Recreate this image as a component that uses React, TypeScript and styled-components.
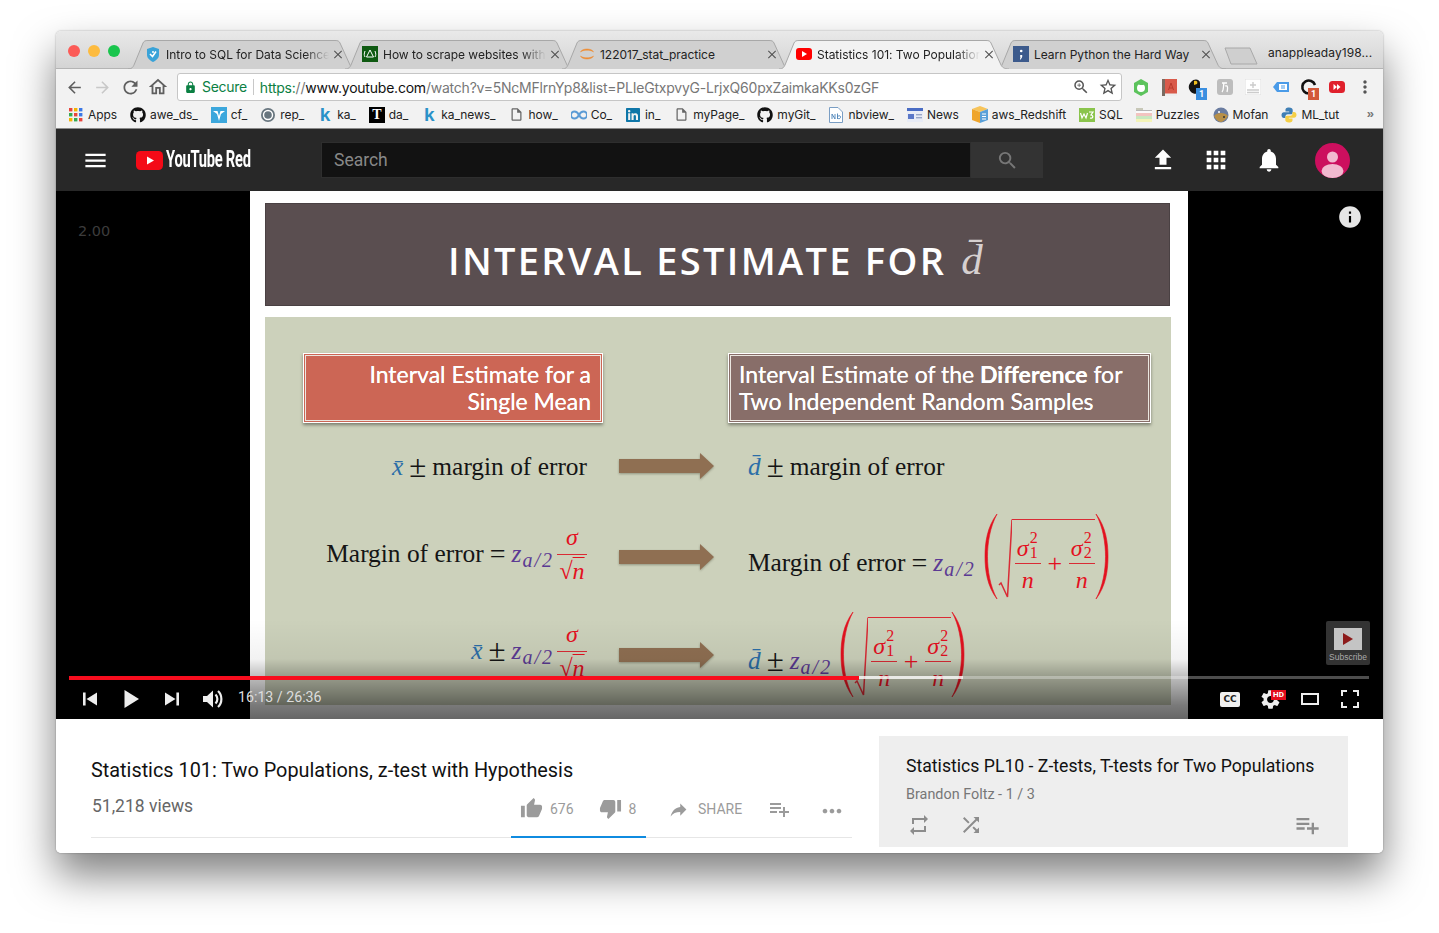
import React from 'react';
import styled, { createGlobalStyle } from 'styled-components';
import { FaGithub, FaLinkedin } from 'react-icons/fa';
import {
  MdArrowBack, MdArrowForward, MdRefresh, MdOutlineHome, MdLock, MdZoomIn, MdStarBorder, MdMoreVert,
  MdMenu, MdSearch, MdFileUpload, MdApps, MdNotifications, MdInfo, MdThumbUp, MdThumbDown, MdReply,
  MdPlaylistAdd, MdMoreHoriz, MdRepeat, MdShuffle, MdSettings, MdClose, MdOutlineInsertDriveFile,
} from 'react-icons/md';

const Global = createGlobalStyle`
  html, body { margin: 0; padding: 0; background: #fff; }
  body { font-family: Roboto, "Liberation Sans", sans-serif; overflow: hidden; }
  * { box-sizing: border-box; }
`;

const Page = styled.div`
  width: 1439px; height: 933px; padding: 31px 0 0 56px; background: #fff;
`;
const Win = styled.div`
  width: 1327px; height: 822px; border-radius: 5px; overflow: hidden; background: #fff;
  box-shadow: 0 22px 42px rgba(0,0,0,.5), 0 0 2px rgba(0,0,0,.35);
  display: flex; flex-direction: column;
`;
const TabStrip = styled.div`
  height: 38px; flex: none; display: flex; align-items: flex-end; padding-left: 12px;
  background: linear-gradient(#e9e9e9, #d4d4d4); border-bottom: 1px solid #b4b4b4;
`;
const Lights = styled.div`
  display: flex; gap: 8px; align-self: flex-start; margin: 14px 8px 0 0;
`;
const Light = styled.span<{ $c: string }>`
  width: 12px; height: 12px; border-radius: 50%; background: ${p => p.$c};
`;
const Tab = styled.div<{ $active?: boolean; $first?: boolean }>`
  position: relative; width: 230px; height: 29px; margin-left: ${p => p.$first ? 0 : -13}px; margin-bottom: -1px;
  display: flex; align-items: center; padding: 0 13px 1px 17px; flex: none;
  z-index: ${p => p.$active ? 2 : 1};
  font: 12px Inter, "Liberation Sans", sans-serif; color: #222;
  letter-spacing: -.02px;
`;
const TabShape = styled.svg`
  position: absolute; inset: 0; width: 100%; height: 100%;
`;
const Fav = styled.span`
  position: relative; width: 16px; height: 16px; flex: none; margin-right: 5px; display: flex; align-items: center; justify-content: center;
`;
const TabTitle = styled.span<{ $fade?: boolean }>`
  position: relative; flex: 1; white-space: nowrap; overflow: hidden;
  ${p => p.$fade ? 'mask-image: linear-gradient(90deg, #000 85%, transparent 100%);' : ''}
`;
const TabClose = styled.span`
  position: relative; width: 14px; display: flex; justify-content: center; color: #555; flex: none; margin-left: 2px;
`;
const NewTab = styled.svg`
  width: 34px; height: 18px; flex: none; margin: 0 0 3px -2px;
`;
const Account = styled.div`
  font: 12px Inter, "Liberation Sans", sans-serif; color: #222; align-self: flex-start; margin: 14px 0 0 10px; letter-spacing: .1px; white-space: nowrap;
`;
const Toolbar = styled.div`
  height: 33px; flex: none; background: #f2f2f2; display: flex; align-items: center; padding: 3px 0 0 4px;
`;
const Nav = styled.span<{ $off?: boolean }>`
  width: 28px; display: flex; justify-content: center; color: ${p => p.$off ? '#c8c8c8' : '#5f5f5f'}; flex: none;
`;
const Address = styled.div`
  width: 945px; height: 28px; margin: 0 5px; background: #fff; border: 1px solid #c6c6c6; border-radius: 3px; flex: none;
  display: flex; align-items: center; padding: 0 0 0 6px; font: 14px Inter, "Liberation Sans", sans-serif; white-space: nowrap;
`;
const Secure = styled.span`
  color: #0b8043; margin-left: 5px; padding-right: 6px; border-right: 1px solid #c8c8c8; line-height: 16px; letter-spacing: -.3px;
`;
const Url = styled.span`
  margin-left: 6px; color: #777; flex: 1; letter-spacing: -.22px;
  b { font-weight: 400; color: #0b8043; }
  i { font-style: normal; color: #111; }
`;
const AddrBtn = styled.span`
  width: 27px; display: flex; justify-content: center; color: #555; flex: none;
`;
const Ext = styled.span`
  position: relative; width: 28px; height: 20px; display: flex; justify-content: center; align-items: center; flex: none;
`;
const Badge = styled.span<{ $c: string }>`
  position: absolute; right: 4px; bottom: -3px; width: 11px; height: 12px; background: ${p => p.$c}; color: #fff;
  font: 700 9px/12px Roboto, sans-serif; text-align: center;
`;
const Marks = styled.div`
  height: 27px; flex: none; background: #f2f2f2; display: flex; align-items: center; gap: 13px; padding: 0 0 1px 12px;
  border-bottom: 1px solid #8a8a8a; position: relative;
`;
const Mark = styled.span`
  display: flex; align-items: center; gap: 4px; font: 12px Inter, "Liberation Sans", sans-serif; color: #222; white-space: nowrap; flex: none; letter-spacing: -.05px;
`;
const MarkIcon = styled.span`
  width: 16px; height: 16px; display: flex; align-items: center; justify-content: center; flex: none;
`;
const KGlyph = styled.span`
  font: 700 19px/16px "Liberation Sans", sans-serif; color: #2a91c8;
`;
const TGlyph = styled.span`
  width: 16px; height: 16px; background: #000; color: #fff; font: 700 14px/16px "Liberation Serif", serif; text-align: center;
`;
const More = styled.span`
  position: absolute; right: 9px; top: 3px; font: 700 13px/18px "Liberation Sans", sans-serif; color: #777;
`;
const YtBar = styled.header`
  height: 62px; flex: none; background: #282828; display: flex; align-items: center; padding-left: 26px; color: #fff;
`;
const LogoWrap = styled.div`
  display: flex; align-items: center; margin-left: 27px; width: 185px; flex: none;
`;
const LogoText = styled.span`
  display: block; width: 86px; margin-left: 3px; font: 700 23px/24px Roboto, sans-serif; white-space: nowrap; letter-spacing: -.4px;
  transform: scaleX(.64); transform-origin: left center;
`;
const SearchBox = styled.div`
  width: 650px; height: 36px; background: #121212; border: 1px solid #2e2e2e; font-size: 17.5px; color: #888; display: flex; align-items: center; padding-left: 12px; flex: none;
`;
const SearchBtn = styled.div`
  width: 72px; height: 36px; background: #333; color: #777; display: flex; align-items: center; justify-content: center; flex: none;
`;
const YtIcons = styled.div`
  display: flex; align-items: center; margin-left: 106px; gap: 25px;
`;
const Avatar = styled.svg`
  margin-left: 32px; flex: none;
`;
const Player = styled.section`
  position: relative; height: 528px; flex: none; background: #000; overflow: hidden; padding-left: 194px;
`;
const Slide = styled.div`
  width: 938px; height: 528px; background: #fff; padding: 12px 0 0 15px;
`;
const SlideHead = styled.div`
  width: 905px; height: 103px; background: #5a4e50; border: 1px solid #4a4143; color: #fff; display: flex; align-items: center; padding: 11px 0 0 182px;
  font: 600 38px "Open Sans", sans-serif; letter-spacing: 2.3px; white-space: nowrap;
`;
const HeadVar = styled.span`
  font: italic 400 43px "Liberation Serif", serif; color: #d6d0d0; margin-left: 15px; letter-spacing: 0; position: relative; top: -1px;
`;
const SlideBody = styled.div`
  width: 906px; height: 388px; margin-top: 11px; background: #ccd1bb; padding-top: 36px;
`;
const BoxRow = styled.div`
  display: flex; gap: 125px; padding-left: 38px; margin-bottom: 22px;
`;
const LabelBox = styled.div<{ $w: number; $bg: string; $right?: boolean }>`
  width: ${p => p.$w}px; height: 70px; flex: none; background: ${p => p.$bg}; border: 1px solid #fff;
  outline: 1px solid #eae6df; outline-offset: -3px;
  box-shadow: 0 2px 3px rgba(60,60,50,.55), inset 0 0 0 3px ${p => p.$bg};
  color: #fff; font: 400 23px/27px Lato, "Open Sans", sans-serif; padding: 7px 11px 0 10px;
  text-shadow: 0 0 .5px #fff;
  text-align: ${p => p.$right ? 'right' : 'left'}; white-space: nowrap;
  b { font-weight: 700; }
`;
const MathRow = styled.div<{ $h: number; $mb?: number }>`
  height: ${p => p.$h}px; margin-bottom: ${p => p.$mb ?? 0}px; display: grid; grid-template-columns: 322px 161px 1fr; align-items: center;
`;
const Formula = styled.div<{ $right?: boolean }>`
  display: flex; align-items: center; justify-content: ${p => p.$right ? 'flex-end' : 'flex-start'}; white-space: nowrap;
  font: 25.4px "Liberation Serif", serif; color: #151515;
`;
const Txt = styled.span<{ $shift?: number }>`
  position: relative; top: ${p => p.$shift ?? 0}px; display: inline-flex; align-items: center;
`;
const Bar = styled.span`
  font-style: italic; color: #2b6ea8; margin-right: 6px;
`;
const Pm = styled.span`
  margin-right: 6px; font-size: 31px; line-height: 25px;
`;
const Eq = styled.span`
  margin: 0 6px; font-size: 28px; line-height: 25px;
`;
const Zed = styled.span`
  font-style: italic; color: #5b3a93; margin-right: 3px;
  sub { font-size: 20px; vertical-align: -5px; line-height: 0; letter-spacing: 2px; margin-left: 1px; }
`;
const Frac = styled.span<{ $w?: number }>`
  display: inline-flex; flex-direction: column; align-items: center; color: #e3101f; width: ${p => p.$w ?? 30}px;
  font: italic 24px/22px "Liberation Serif", serif;
`;
const FracTop = styled.span<{ $pb?: number }>`
  display: block; width: 100%; text-align: center; border-bottom: 1.5px solid #d92b35; padding-bottom: ${p => p.$pb ?? 6}px; white-space: nowrap;
`;
const FracBot = styled.span`
  display: block; text-align: center; padding-top: 5px;
`;
const RootedN = styled.span`
  text-decoration: overline; text-decoration-thickness: 1px;
`;
const Sig = styled.span`
  position: relative; display: inline-block; padding-right: 10px; line-height: 22px;
  sup, sub { position: absolute; font: 16px/12px "Liberation Serif", serif; left: 13px; }
  sup { top: -5px; }
  sub { top: 10px; }
`;
const Root = styled.span`
  display: inline-flex; align-items: stretch; height: 87px; margin-left: 5px; color: #e3101f;
`;
const Under = styled.span`
  width: 83px; border-top: 1.5px solid #d92b35; margin: 6px 0 0 0; display: flex; align-items: flex-start; justify-content: space-between; padding: 17px 0 0 3px;
`;
const Plus = styled.span`
  font: 26px/25px "Liberation Serif", serif; margin-top: 14px;
`;
const Arrow = styled.svg`
  margin-left: 31px; filter: drop-shadow(0 1px 1px rgba(60,60,40,.4));
`;
const Overlay = styled.div`
  position: absolute; left: 0; right: 0; bottom: 0; height: 100px;
  background: linear-gradient(rgba(0,0,0,0) 0%, rgba(0,0,0,.05) 40%, rgba(0,0,0,.24) 56%, rgba(0,0,0,.52) 86%, rgba(0,0,0,.6) 100%);
`;
const Speed = styled.div`
  position: absolute; left: 22px; top: 32px; font: 14.5px "DejaVu Sans", sans-serif; color: #3c3c3c;
`;
const InfoBtn = styled.div`
  position: absolute; right: 20px; top: 13px; color: #e6e6e6; display: flex;
`;
const Sub = styled.div`
  position: absolute; left: 1270px; top: 430px; width: 44px; height: 44px; background: #333; border-radius: 2px;
  display: flex; flex-direction: column; align-items: center; padding-top: 7px;
  font: 8.5px/10px "Liberation Sans", sans-serif; color: #aaa;
`;
const SubIcon = styled.span`
  width: 28px; height: 22px; background: #c4c4c4; display: flex; align-items: center; justify-content: center; margin-bottom: 2px;
`;
const Track = styled.div`
  position: absolute; left: 13px; right: 14px; top: 485px; height: 3px; background: rgba(255,255,255,.3);
`;
const Buffered = styled.div`
  position: absolute; left: 0; top: 0; height: 100%; width: 894px; background: rgba(255,255,255,.7);
`;
const Played = styled.div`
  position: absolute; left: 0; top: -.5px; height: 4px; width: 790px; background: #f80d1e;
`;
const Controls = styled.div`
  position: absolute; left: 13px; right: 13px; top: 490px; height: 36px; display: flex; align-items: center; color: #eee;
`;
const Ctl = styled.span`
  width: 41px; height: 36px; display: flex; align-items: center; justify-content: center; flex: none; position: relative;
`;
const CtlR = styled(Ctl)`
  width: 40px;
`;
const Time = styled.span`
  margin-left: 5px; font-size: 14.2px; color: #ddd; flex: 1; position: relative; top: -2px;
`;
const CC = styled.span`
  width: 20px; height: 15px; background: #f0f0f0; color: #222; border-radius: 2px; font: 700 9px/15px "DejaVu Sans", sans-serif; text-align: center;
`;
const HD = styled.span`
  position: absolute; left: 21px; top: 9px; width: 15px; height: 10px; background: #e40c1c; color: #fff; font: 700 8px/10px Roboto, sans-serif; text-align: center;
`;
const Below = styled.section`
  flex: 1; display: flex; background: #fff; padding-left: 35px; align-items: flex-start;
`;
const Info = styled.div`
  width: 761px; flex: none; padding-top: 40px;
`;
const Title = styled.div`
  font-size: 19.85px; line-height: 24px; color: #111; white-space: nowrap;
`;
const Meta = styled.div`
  display: flex; height: 55px; margin-top: 0; border-bottom: 1px solid #e6e6e6; align-items: stretch;
`;
const Views = styled.div`
  font-size: 17.5px; line-height: 24px; color: #666; padding: 11px 0 0 1px; width: 420px; flex: none;
`;
const Ratings = styled.div`
  display: flex; align-items: center; width: 135px; padding: 0 0 2px 9px; margin-bottom: -1px; border-bottom: 2px solid #0f8be0; flex: none; color: #9b9b9b; font-size: 14px;
`;
const Act = styled.span<{ $ml?: number; $gap?: number; $top?: number }>`
  display: flex; align-items: center; gap: ${p => p.$gap ?? 7}px; margin-left: ${p => p.$ml ?? 0}px; color: #9b9b9b; font-size: 14px; flex: none;
  position: relative; top: ${p => p.$top ?? 0}px;
`;
const Actions = styled.div`
  display: flex; align-items: center; padding: 0 0 2px; flex: none;
`;
const Panel = styled.aside`
  margin: 17px 0 0 27px; width: 469px; height: 111px; background: #eee; padding: 18px 27px 0;
`;
const PanelTitle = styled.div`
  font-size: 17.65px; line-height: 24px; color: #111; white-space: nowrap;
`;
const PanelSub = styled.div`
  font-size: 14.4px; line-height: 20px; color: #777; margin-top: 7px;
`;
const PanelIcons = styled.div`
  display: flex; align-items: center; color: #8c8c8c; margin-top: 6px; margin-left: 1px;
`;
const Spacer = styled.span`
  flex: 1;
`;
const Gap = styled.span`
  width: 28px; flex: none;
`;
const Mirror = styled.span`
  display: flex; transform: scaleX(-1); margin-right: 2px;
`;

const TabBg = ({ active }: { active?: boolean }) => (
  <TabShape viewBox="0 0 230 29" preserveAspectRatio="none">
    <path d="M0 29 C4 29 5 27 6 25 L15 3 C16 1 17 .5 20 .5 H207 C210 .5 211 1 212 3 L222 25 C223 27 225 29 230 29"
      fill={active ? '#f2f2f2' : '#d0d0d0'} stroke="#a8a8a8" strokeWidth="1" />
  </TabShape>
);

const Close = () => <TabClose><MdClose size={15} /></TabClose>;

const BigArrow = () => (
  <Arrow width="97" height="28" viewBox="0 0 97 28">
    <polygon points="1,7 82,7 82,1 96,14 82,27 82,21 1,21" fill="#8f6f52" />
  </Arrow>
);

const Paren = ({ flip }: { flip?: boolean }) => (
  <svg width="14" height="87" viewBox="0 0 14 87" style={flip ? { transform: 'scaleX(-1)' } : undefined}>
    <path d="M13 1 C3 14 1 30 1 43.5 C1 57 3 73 13 86 C6 73 3.5 57 3.5 43.5 C3.5 30 6 14 13 1Z" fill="#e3101f" stroke="#e3101f" strokeWidth=".6" />
  </svg>
);
const Radical = () => (
  <svg width="14" height="87" viewBox="0 0 14 87">
    <path d="M1 72 L3 70 L9.5 84 L14 6.5" fill="none" stroke="#d92b35" strokeWidth="1.5" />
  </svg>
);
const RootSum = () => (
  <Root>
    <Paren />
    <Radical />
    <Under>
      <Frac $w={26}><FracTop $pb={4}><Sig>σ<sup>2</sup><sub>1</sub></Sig></FracTop><FracBot>n</FracBot></Frac>
      <Plus>+</Plus>
      <Frac $w={26}><FracTop $pb={4}><Sig>σ<sup>2</sup><sub>2</sub></Sig></FracTop><FracBot>n</FracBot></Frac>
    </Under>
    <Paren flip />
  </Root>
);
const SimpleFrac = () => <Frac><FracTop>σ</FracTop><FracBot>√<RootedN>n</RootedN></FracBot></Frac>;
const Za = () => <Zed>z<sub>a/2</sub></Zed>;

const Shield = () => (
  <svg width="14" height="15" viewBox="0 0 14 15"><path d="M1 2 L7 0 L13 2 V8 C13 11 10 13.5 7 15 C4 13.5 1 11 1 8Z" fill="#3aa3d8" /><path d="M4 7 L6.5 9.5 L10 4.5" stroke="#fff" strokeWidth="1.6" fill="none" /><circle cx="7" cy="5" r="1" fill="#fff" /></svg>
);
const AtomFav = () => (
  <svg width="16" height="16" viewBox="0 0 16 16"><rect width="16" height="16" fill="#0f5a12" /><path d="M8 4 L11.5 11 H4.5Z M3 5 C2 8 2 9 3 11 M13 5 C14 8 14 9 13 11" stroke="#fff" fill="none" strokeWidth="1" /></svg>
);
const JupFav = () => (
  <svg width="16" height="16" viewBox="0 0 16 16"><path d="M1.5 6 C3 2 13 2 14.5 6 C12 3.6 4 3.6 1.5 6Z M1.5 10 C3 14 13 14 14.5 10 C12 12.4 4 12.4 1.5 10Z" fill="#ef8a2f" stroke="#ef8a2f" strokeWidth=".5" /></svg>
);
const YtFav = () => (
  <svg width="16" height="12" viewBox="0 0 16 12"><rect width="16" height="12" rx="3" fill="#f00" /><polygon points="6,3 11,6 6,9" fill="#fff" /></svg>
);
const LpFav = () => (
  <svg width="16" height="16" viewBox="0 0 16 16"><rect width="16" height="16" fill="#3c5a8c" /><circle cx="8.2" cy="5" r="1.3" fill="#fff" /><path d="M7.2 9 h2 v2 l-1.5 2.5 h-.8 l.6 -2.5 h-.3z" fill="#fff" /></svg>
);
const AppsIcon = () => (
  <svg width="14" height="14" viewBox="0 0 14 14">
    {['#e8453c', '#f4b400', '#3b78e7', '#34a853', '#e8453c', '#3b78e7', '#f4b400', '#34a853', '#e8453c'].map((c, i) => (
      <rect key={i} x={(i % 3) * 5} y={Math.floor(i / 3) * 5} width="3.4" height="3.4" fill={c} />
    ))}
  </svg>
);
const CfIcon = () => (
  <svg width="16" height="16" viewBox="0 0 16 16"><rect width="16" height="16" fill="#3ca7dc" /><path d="M2 4 H6.5 L8 9 L9.5 4 H14 L10 7 L8 14 L6 7Z" fill="#fff" /></svg>
);
const RepIcon = () => (
  <svg width="16" height="16" viewBox="0 0 16 16"><circle cx="8" cy="8" r="7" fill="#68767f" /><circle cx="8" cy="8" r="4.5" fill="none" stroke="#fff" strokeWidth="1.4" /><circle cx="8" cy="8" r="2" fill="#68767f" /></svg>
);
const CoIcon = () => (
  <svg width="16" height="10" viewBox="0 0 16 10"><path d="M8 5 C6.5 2 4.5 1.5 3.5 1.5 a3.5 3.5 0 0 0 0 7 C4.5 8.5 6.5 8 8 5 C9.5 2 11.5 1.5 12.5 1.5 a3.5 3.5 0 0 1 0 7 C11.5 8.5 9.5 8 8 5Z" fill="none" stroke="#5b9bd5" strokeWidth="2" /></svg>
);
const NbIcon = () => (
  <svg width="14" height="16" viewBox="0 0 14 16"><path d="M.5 .5 H9 L13.5 5 V15.5 H.5Z" fill="#fff" stroke="#7a9ec4" /><path d="M3 12 V7 L6 12 V7 M8.5 6.5 V12 M8.5 9.5 C10.5 8 12 9 11.5 10.5 C11 12 9.5 12 8.5 11" stroke="#4a82b8" fill="none" strokeWidth=".9" /></svg>
);
const NewsIcon = () => (
  <svg width="16" height="14" viewBox="0 0 16 14"><rect width="16" height="14" fill="#e8ecf6" /><rect width="16" height="3" fill="#4a6cc4" /><rect x="1" y="6" width="6" height="5" fill="#5b78c8" /><rect x="9" y="6" width="6" height="1.4" fill="#9aa8c8" /><rect x="9" y="9" width="6" height="1.4" fill="#9aa8c8" /></svg>
);
const AwsIcon = () => (
  <svg width="16" height="17" viewBox="0 0 16 17"><polygon points="8,0 16,3 8,6 0,3" fill="#f7c45a" /><polygon points="0,3 8,6 8,17 0,14" fill="#efa52c" /><polygon points="16,3 8,6 8,17 16,14" fill="#5aa0d8" /><path d="M10 8 h4 M10 10.5 h4 M10 13 h4" stroke="#fff" strokeWidth="1" /></svg>
);
const SqlIcon = () => (
  <svg width="16" height="14" viewBox="0 0 16 14"><rect width="16" height="14" fill="#8ac44c" /><path d="M1.5 5 L3 10 L5 6 L7 10 L8.5 5 M10 4 H14 L12 7 C14.5 7 14.5 11 11 10" fill="none" stroke="#fff" strokeWidth="1.2" /></svg>
);
const PuzzlesIcon = () => (
  <svg width="16" height="15" viewBox="0 0 16 15"><rect y="1" width="7" height="2" fill="#c8c8b8" /><rect y="3" width="16" height="3" fill="#fafafa" /><rect y="6" width="16" height="3" fill="#f2c4c0" /><rect y="9" width="16" height="3" fill="#c8e8c0" /><rect y="12" width="16" height="3" fill="#f4f4b8" /><rect y="3" width="16" height=".7" fill="#999" /></svg>
);
const MofanIcon = () => (
  <svg width="16" height="16" viewBox="0 0 16 16"><circle cx="8" cy="8" r="7.5" fill="#6a7ca0" /><path d="M1 9 C4 5 12 5 15 9 C13 13 10 14.5 8 15 C5 14.5 3 13 1 9Z" fill="#b89048" /><circle cx="6" cy="5" r="1" fill="#fff" /><circle cx="11" cy="10" r="1" fill="#333" /></svg>
);
const Py = () => (
  <svg width="16" height="16" viewBox="0 0 16 16">
    <path d="M8 0.5 C5 .5 4.5 1.7 4.5 3 V4.5 H8.2 V5.2 H3 C1.5 5.2 .5 6.4 .5 8 C.5 9.8 1.5 11 3 11 H4.5 V9.3 C4.5 8 5.5 7.3 6.7 7.3 H10 C11 7.3 11.7 6.5 11.7 5.5 V3 C11.7 1.5 10.5 .5 8 .5Z" fill="#3f7fb5" />
    <path d="M8 15.5 C11 15.5 11.5 14.3 11.5 13 V11.5 H7.8 V10.8 H13 C14.5 10.8 15.5 9.6 15.5 8 C15.5 6.2 14.5 5 13 5 H11.5 V6.7 C11.5 8 10.5 8.7 9.3 8.7 H6 C5 8.7 4.3 9.5 4.3 10.5 V13 C4.3 14.5 5.5 15.5 8 15.5Z" fill="#f5cf45" />
  </svg>
);
const GreenExt = () => (
  <svg width="16" height="17" viewBox="0 0 16 17"><polygon points="8,0 15,4 15,13 8,17 1,13 1,4" fill="#5cc35c" /><circle cx="8" cy="9" r="4" fill="#fff" /><path d="M8 2 L11 6 H6Z" fill="#5cc35c" /></svg>
);
const BookExt = () => (
  <svg width="15" height="17" viewBox="0 0 15 17"><rect width="15" height="17" fill="#d95a4a" /><rect width="3" height="17" fill="#7a6a60" /><rect x="3" y="14.5" width="12" height="2.5" fill="#eee" /><path d="M6.5 11 L9 4 L11.5 11 M7.5 9 H10.5" stroke="#b83a2c" fill="none" /></svg>
);
const PyExt = () => (
  <svg width="18" height="16" viewBox="0 0 18 16"><path d="M3 3 C6 -1 12 0 12 4 V11 C12 15 6 16 3 13 C0 10 0 6 3 3Z" fill="#151515" /><path d="M6 2 C9 1 10 3 9 5 L6 6Z" fill="#f0c020" /></svg>
);
const GreyExt = () => (
  <svg width="16" height="16" viewBox="0 0 16 16"><rect width="16" height="16" rx="3" fill="#bdbdbd" /><path d="M5 4 H10 M7 4 C6 8 7 11 5 13 M8 7 C11 6 11 9 10 13" stroke="#fff" fill="none" strokeWidth="1.3" /></svg>
);
const DocExt = () => (
  <svg width="16" height="16" viewBox="0 0 16 16"><rect width="16" height="16" fill="#fff" stroke="#ddd" /><path d="M8 3 V9 M5 6 H11 M2 11 H14 M2 13.5 H14" stroke="#ccc" strokeWidth="1.4" /></svg>
);
const BlueExt = () => (
  <svg width="16" height="14" viewBox="0 0 16 14"><polygon points="0,7 4,2 16,2 16,12 4,12" fill="#4a9be8" /><rect x="6" y="4" width="8" height="6" fill="#fff" /><path d="M9 5 V9 M11 5 V9" stroke="#4a9be8" /></svg>
);
const SyncExt = () => (
  <svg width="18" height="18" viewBox="0 0 18 18"><path d="M15 7 A6.5 6.5 0 1 0 14 13" fill="none" stroke="#111" strokeWidth="2.6" /></svg>
);
const RedExt = () => (
  <svg width="16" height="12" viewBox="0 0 16 12"><rect width="16" height="12" rx="3.5" fill="#e0202c" /><polygon points="4.5,3 8,6 4.5,9" fill="#fff" /><polygon points="8,3 11.5,6 8,9" fill="#fff" /></svg>
);
const Prev = () => <svg width="16" height="16" viewBox="0 0 16 16"><rect x="1" y="1.5" width="2.6" height="13" fill="#eee" /><polygon points="15,1.5 15,14.5 4.5,8" fill="#eee" /></svg>;
const Next = () => <svg width="16" height="16" viewBox="0 0 16 16"><rect x="12.4" y="1.5" width="2.6" height="13" fill="#eee" /><polygon points="1,1.5 1,14.5 11.5,8" fill="#eee" /></svg>;
const Play = () => <svg width="18" height="20" viewBox="0 0 18 20"><polygon points="2.5,1 17,10 2.5,19" fill="#eee" /></svg>;
const Vol = () => <svg width="22" height="20" viewBox="0 0 22 20"><polygon points="1,7 5,7 11,1.5 11,18.5 5,13 1,13" fill="#eee" /><path d="M13.5 5.5 C16 8 16 12 13.5 14.5 M16 2 C20.5 6 20.5 14 16 18" fill="none" stroke="#eee" strokeWidth="2.2" /></svg>;
const Theater = () => <svg width="18" height="12" viewBox="0 0 18 12"><rect x="1" y="1" width="16" height="10" fill="none" stroke="#eee" strokeWidth="2" /></svg>;
const Full = () => <svg width="18" height="18" viewBox="0 0 18 18"><path d="M1 6 V1 H6 M12 1 H17 V6 M17 12 V17 H12 M6 17 H1 V12" fill="none" stroke="#eee" strokeWidth="2" /></svg>;

export default function App() {
  const tabs: { t: string; f: React.ReactNode; fade?: boolean; active?: boolean }[] = [
    { t: 'Intro to SQL for Data Science', f: <Shield />, fade: true },
    { t: 'How to scrape websites with Python', f: <AtomFav />, fade: true },
    { t: '122017_stat_practice', f: <JupFav /> },
    { t: 'Statistics 101: Two Populations, z-test', f: <YtFav />, fade: true, active: true },
    { t: 'Learn Python the Hard Way', f: <LpFav /> },
  ];
  const marks: [React.ReactNode, string][] = [
    [<AppsIcon />, 'Apps'],
    [<FaGithub size={16} color="#111" />, 'awe_ds_'],
    [<CfIcon />, 'cf_'],
    [<RepIcon />, 'rep_'],
    [<KGlyph>k</KGlyph>, 'ka_'],
    [<TGlyph>T</TGlyph>, 'da_'],
    [<KGlyph>k</KGlyph>, 'ka_news_'],
    [<MdOutlineInsertDriveFile size={15} color="#666" />, 'how_'],
    [<CoIcon />, 'Co_'],
    [<FaLinkedin size={16} color="#0e76a8" />, 'in_'],
    [<MdOutlineInsertDriveFile size={15} color="#666" />, 'myPage_'],
    [<FaGithub size={16} color="#111" />, 'myGit_'],
    [<NbIcon />, 'nbview_'],
    [<NewsIcon />, 'News'],
    [<AwsIcon />, 'aws_Redshift'],
    [<SqlIcon />, 'SQL'],
    [<PuzzlesIcon />, 'Puzzles'],
    [<MofanIcon />, 'Mofan'],
    [<Py />, 'ML_tut'],
  ];
  return (
    <Page>
      <Global />
      <Win>
        <TabStrip>
          <Lights>
            <Light $c="#fc5b57" /><Light $c="#fdbb3f" /><Light $c="#19c54d" />
          </Lights>
          {tabs.map((x, i) => (
            <Tab key={x.t} $active={x.active} $first={i === 0}>
              <TabBg active={x.active} />
              <Fav>{x.f}</Fav>
              <TabTitle $fade={x.fade}>{x.t}</TabTitle>
              <Close />
            </Tab>
          ))}
          <NewTab viewBox="0 0 34 18"><path d="M1 1 H26 L33 17 H7Z" fill="#cfcfcf" stroke="#a8a8a8" /></NewTab>
          <Account>anappleaday198...</Account>
        </TabStrip>
        <Toolbar>
          <Nav><MdArrowBack size={19} /></Nav>
          <Nav $off><MdArrowForward size={19} /></Nav>
          <Nav><MdRefresh size={21} /></Nav>
          <Nav><MdOutlineHome size={22} /></Nav>
          <Address>
            <MdLock size={13} color="#0b8043" />
            <Secure>Secure</Secure>
            <Url><b>https:</b>//<i>www.youtube.com</i>/watch?v=5NcMFlrnYp8&amp;list=PLIeGtxpvyG-LrjxQ60pxZaimkaKKs0zGF</Url>
            <AddrBtn><MdZoomIn size={18} /></AddrBtn>
            <AddrBtn><MdStarBorder size={20} /></AddrBtn>
          </Address>
          <Ext><GreenExt /></Ext>
          <Ext><BookExt /></Ext>
          <Ext><PyExt /><Badge $c="#3b8fe0">1</Badge></Ext>
          <Ext><GreyExt /></Ext>
          <Ext><DocExt /></Ext>
          <Ext><BlueExt /></Ext>
          <Ext><SyncExt /><Badge $c="#d2593a">1</Badge></Ext>
          <Ext><RedExt /></Ext>
          <Ext><MdMoreVert size={20} color="#555" /></Ext>
        </Toolbar>
        <Marks>
          {marks.map(([ic, label]) => (
            <Mark key={label}><MarkIcon>{ic}</MarkIcon>{label}</Mark>
          ))}
          <More>»</More>
        </Marks>
        <YtBar>
          <MdMenu size={27} color="#fff" />
          <LogoWrap>
            <svg width="27" height="19" viewBox="0 0 27 19"><rect width="27" height="19" rx="4.5" fill="#f40a17" /><polygon points="11,5.5 18,9.5 11,13.5" fill="#fff" /></svg>
            <LogoText>YouTube Red</LogoText>
          </LogoWrap>
          <SearchBox>Search</SearchBox>
          <SearchBtn><MdSearch size={23} /></SearchBtn>
          <YtIcons>
            <MdFileUpload size={28} />
            <MdApps size={28} />
            <MdNotifications size={28} />
          </YtIcons>
          <Avatar width="35" height="35" viewBox="0 0 35 35">
            <circle cx="17.5" cy="17.5" r="17.5" fill="#cc0f5e" />
            <circle cx="17.5" cy="14" r="5.5" fill="#f1b9cf" />
            <ellipse cx="17.5" cy="28" rx="11" ry="7" fill="#f1b9cf" />
          </Avatar>
        </YtBar>
        <Player>
          <Slide>
            <SlideHead>INTERVAL ESTIMATE FOR<HeadVar>d̄</HeadVar></SlideHead>
            <SlideBody>
              <BoxRow>
                <LabelBox $w={300} $bg="#cc6655" $right>Interval Estimate for a<br />Single Mean</LabelBox>
                <LabelBox $w={423} $bg="#886e69">Interval Estimate of the <b>Difference</b> for<br />Two Independent Random Samples</LabelBox>
              </BoxRow>
              <MathRow $h={42} $mb={26}>
                <Formula $right><Bar>x̄</Bar><Pm>±</Pm>margin of error</Formula>
                <BigArrow />
                <Formula><Bar>d̄</Bar><Pm>±</Pm>margin of error</Formula>
              </MathRow>
              <MathRow $h={87} $mb={11}>
                <Formula $right><Txt $shift={-3}>Margin of error<Eq>=</Eq><Za /><SimpleFrac /></Txt></Formula>
                <BigArrow />
                <Formula><Txt $shift={6}>Margin of error<Eq>=</Eq><Za /></Txt><RootSum /></Formula>
              </MathRow>
              <MathRow $h={87}>
                <Formula $right><Txt $shift={-4}><Bar>x̄</Bar><Pm>±</Pm><Za /><SimpleFrac /></Txt></Formula>
                <BigArrow />
                <Formula><Txt $shift={6}><Bar>d̄</Bar><Pm>±</Pm><Za /></Txt><RootSum /></Formula>
              </MathRow>
            </SlideBody>
          </Slide>
          <Overlay />
          <Speed>2.00</Speed>
          <InfoBtn><MdInfo size={26} /></InfoBtn>
          <Sub>
            <SubIcon><svg width="12" height="14" viewBox="0 0 12 14"><polygon points="1,1 11,7 1,13" fill="#8c1a1a" /></svg></SubIcon>
            Subscribe
          </Sub>
          <Track>
            <Buffered />
            <Played />
          </Track>
          <Controls>
            <Ctl><Prev /></Ctl>
            <Ctl><Play /></Ctl>
            <Ctl><Next /></Ctl>
            <Ctl><Vol /></Ctl>
            <Time>16:13 / 26:36</Time>
            <CtlR><CC>CC</CC></CtlR>
            <CtlR><MdSettings size={23} /><HD>HD</HD></CtlR>
            <CtlR><Theater /></CtlR>
            <CtlR><Full /></CtlR>
          </Controls>
        </Player>
        <Below>
          <Info>
            <Title>Statistics 101: Two Populations, z-test with Hypothesis</Title>
            <Meta>
              <Views>51,218 views</Views>
              <Ratings>
                <Act><MdThumbUp size={23} />676</Act>
                <Act $ml={25}><MdThumbDown size={23} />8</Act>
              </Ratings>
              <Actions>
                <Act $ml={22}><Mirror><MdReply size={21} /></Mirror>SHARE</Act>
                <Act $ml={25}><MdPlaylistAdd size={24} /></Act>
                <Act $ml={27} $top={2}><MdMoreHoriz size={28} /></Act>
              </Actions>
            </Meta>
          </Info>
          <Panel>
            <PanelTitle>Statistics PL10 - Z-tests, T-tests for Two Populations</PanelTitle>
            <PanelSub>Brandon Foltz - 1 / 3</PanelSub>
            <PanelIcons>
              <MdRepeat size={24} />
              <Gap />
              <MdShuffle size={24} />
              <Spacer />
              <MdPlaylistAdd size={28} />
            </PanelIcons>
          </Panel>
        </Below>
      </Win>
    </Page>
  );
}
